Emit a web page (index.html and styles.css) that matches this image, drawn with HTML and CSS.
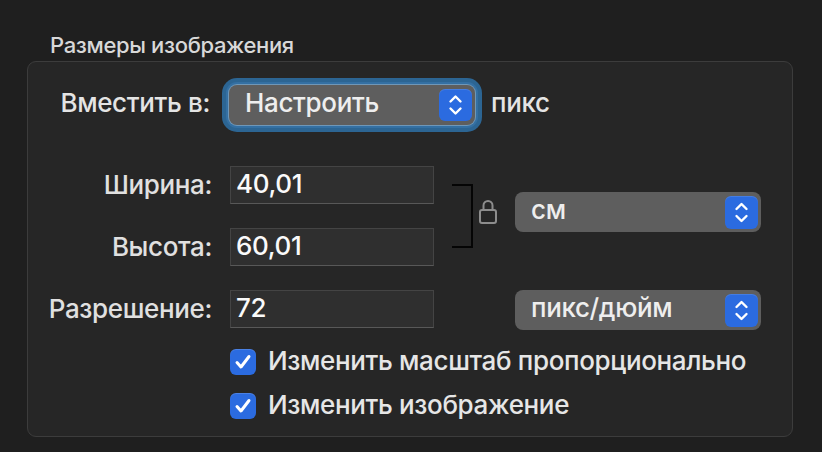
FILE: index.html
```html
<!DOCTYPE html>
<html lang="ru">
<head>
<meta charset="utf-8">
<title>Размеры изображения</title>
<link rel="stylesheet" href="styles.css">
</head>
<body>
<div class="window">
  <div class="title">Размеры изображения</div>
  <div class="panel">
    <div class="fit-row">
      <div class="fit-label">Вместить в:</div>
      <div class="popup popup-fit focused">
        <span class="popup-text">Настроить</span>
        <span class="stepper"><svg viewBox="0 0 33 32" width="33" height="32"><path d="M11.5 12.5 L16.5 7.5 L21.5 12.5 M11.5 19.5 L16.5 24.5 L21.5 19.5" fill="none" stroke="#fff" stroke-width="2.4" stroke-linecap="round" stroke-linejoin="round"/></svg></span>
      </div>
      <div class="fit-unit">пикс</div>
    </div>
    <div class="grid">
      <div class="label r1">Ширина:</div>
      <div class="field r1">40,01</div>
      <div class="label r2">Высота:</div>
      <div class="field r2">60,01</div>
      <div class="label r3">Разрешение:</div>
      <div class="field r3">72</div>
      <div class="link">
        <div class="bracket"></div>
        <svg class="lock" viewBox="0 0 18 25" width="18" height="25"><path d="M4.5 11 V6.5 A4.5 4.5 0 0 1 13.5 6.5 V11" fill="none" stroke="#8d8d8d" stroke-width="2"/><rect x="1" y="11" width="16" height="13" rx="2" fill="none" stroke="#8d8d8d" stroke-width="2"/></svg>
      </div>
      <div class="popup popup-unit">
        <span class="popup-text">см</span>
        <span class="stepper"><svg viewBox="0 0 33 33" width="33" height="33"><path d="M11.5 13 L16.5 8 L21.5 13 M11.5 20 L16.5 25 L21.5 20" fill="none" stroke="#fff" stroke-width="2.4" stroke-linecap="round" stroke-linejoin="round"/></svg></span>
      </div>
      <div class="popup popup-res">
        <span class="popup-text">пикс/дюйм</span>
        <span class="stepper"><svg viewBox="0 0 33 33" width="33" height="33"><path d="M11.5 13 L16.5 8 L21.5 13 M11.5 20 L16.5 25 L21.5 20" fill="none" stroke="#fff" stroke-width="2.4" stroke-linecap="round" stroke-linejoin="round"/></svg></span>
      </div>
    </div>
    <div class="checks">
      <div class="check-row">
        <span class="checkbox"><svg viewBox="0 0 26 26" width="26" height="26"><path d="M7 13.5 L11 18 L19 7.5" fill="none" stroke="#fff" stroke-width="3" stroke-linecap="round" stroke-linejoin="round"/></svg></span>
        <span class="check-text">Изменить масштаб пропорционально</span>
      </div>
      <div class="check-row">
        <span class="checkbox"><svg viewBox="0 0 26 26" width="26" height="26"><path d="M7 13.5 L11 18 L19 7.5" fill="none" stroke="#fff" stroke-width="3" stroke-linecap="round" stroke-linejoin="round"/></svg></span>
        <span class="check-text">Изменить изображение</span>
      </div>
    </div>
  </div>
</div>
</body>
</html>
```

FILE: styles.css
```css
* { box-sizing: border-box; }
html, body {
  margin: 0;
  padding: 0;
  background: #1f1f1f;
}
body {
  width: 822px;
  height: 452px;
  overflow: hidden;
  font-family: Inter, "Liberation Sans", sans-serif;
  font-weight: 500;
  letter-spacing: -0.35px;
  color: #e4e4e4;
}
.window {
  padding-top: 32px;
}
.title {
  padding-left: 50px;
  font-size: 22px;
  line-height: 26px;
  height: 29px;
  color: #d8d8d8;
}
.panel {
  margin-left: 27px;
  width: 766px;
  height: 376px;
  background: #262626;
  border: 1px solid #3c3c3c;
  border-radius: 9px;
  padding-top: 23px;
}
.fit-row {
  display: flex;
  align-items: center;
  height: 40px;
}
.fit-label {
  width: 182px;
  text-align: right;
  font-size: 26px;
  line-height: 40px;
  padding-bottom: 4px;
}
.popup {
  display: flex;
  align-items: center;
  justify-content: space-between;
  height: 40px;
  background: #5e5e5e;
  border-radius: 8px;
  padding: 0 3px 0 16px;
  font-size: 26px;
  color: #eeeeee;
}
.popup-fit {
  width: 246px;
  margin-left: 19px;
}
.focused {
  box-shadow: 0 0 0 1px #6f97b8, 0 0 0 3px #3470a3, 0 0 0 7px #2c6593;
}
.popup-text {
  line-height: 40px;
  padding-bottom: 4px;
}
.stepper {
  display: flex;
  width: 33px;
  height: 32px;
  border-radius: 6px;
  background: #2b6be0;
  box-shadow: inset 0 1px 0 rgba(255,255,255,0.12);
}
.popup-unit .stepper, .popup-res .stepper { height: 33px; }
.fit-unit {
  margin-left: 16px;
  font-size: 26px;
  line-height: 40px;
  padding-bottom: 4px;
}
.grid {
  display: grid;
  grid-template-columns: 202px 204px 81px 246px;
  grid-template-rows: 38px 38px 38px;
  row-gap: 24px;
  margin-top: 41px;
}
.label {
  grid-column: 1;
  text-align: right;
  padding-right: 18px;
  font-size: 26px;
  line-height: 38px;
  color: #e0e0e0;
}
.r1 { grid-row: 1; }
.r2 { grid-row: 2; }
.r3 { grid-row: 3; }
.field {
  grid-column: 2;
  background: #2f2f2f;
  border: 1px solid #444;
  border-bottom-color: #585858;
  padding-left: 5px;
  font-size: 26px;
  line-height: 34px;
  color: #fafafa;
}
.link {
  grid-column: 3;
  grid-row: 1 / 3;
  display: flex;
  align-items: flex-start;
  margin-top: 18px;
}
.bracket {
  margin-left: 18px;
  width: 21px;
  height: 64px;
  border: 2px solid #050505;
  border-left: none;
}
.lock {
  margin-left: 6px;
  margin-top: 15px;
}
.popup-unit {
  grid-column: 4;
  grid-row: 1 / 3;
  align-self: start;
  margin-top: 26px;
}
.popup-res {
  grid-column: 4;
  grid-row: 3;
  margin-top: 0;
}
.checks {
  margin-top: 21px;
  padding-left: 202px;
  display: flex;
  flex-direction: column;
  gap: 18px;
}
.check-row {
  display: flex;
  align-items: center;
  height: 26px;
}
.checkbox {
  display: flex;
  width: 26px;
  height: 26px;
  border-radius: 6px;
  background: #2b6be0;
  box-shadow: inset 0 1px 0 rgba(255,255,255,0.15);
}
.check-text {
  margin-left: 12px;
  font-size: 26px;
  line-height: 26px;
  padding-bottom: 3px;
  color: #e6e6e6;
}
```
